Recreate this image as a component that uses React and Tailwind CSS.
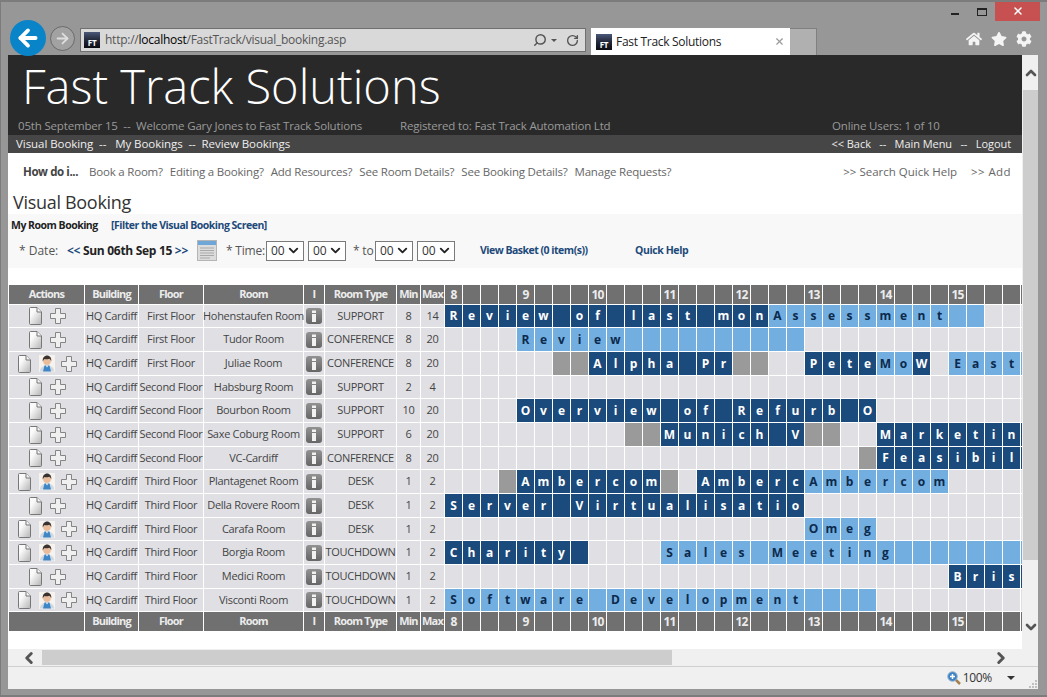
import { ChevronUp, ChevronDown, ChevronLeft, ChevronRight, ArrowLeft, ArrowRight, Search, RotateCw, X } from 'lucide-react'
import { FaHome, FaStar, FaCog } from 'react-icons/fa'

// booking kinds: d = dark blue, l = light blue, g = grey (unavailable)
const ROWS = [
  { h: 'h-[22px]', mgr: false, floor: 'First Floor', room: 'Hohenstaufen Room', type: 'SUPPORT', min: 8, max: 14,
    bookings: [['d', 0, 'Review of last mon', 18], ['l', 18, 'Assessment', 12]] },
  { h: 'h-[23px]', mgr: false, floor: 'First Floor', room: 'Tudor Room', type: 'CONFERENCE', min: 8, max: 20,
    bookings: [['l', 4, 'Review', 16]] },
  { h: 'h-[23px]', mgr: true, floor: 'First Floor', room: 'Juliae Room', type: 'CONFERENCE', min: 8, max: 20,
    bookings: [['g', 6, '', 2], ['d', 8, 'Alpha Pr', 8], ['g', 16, '', 2], ['d', 20, 'Pete', 4], ['l', 24, 'Mo', 2], ['d', 26, 'W', 1], ['l', 28, 'East', 5]] },
  { h: 'h-[22px]', mgr: false, floor: 'Second Floor', room: 'Habsburg Room', type: 'SUPPORT', min: 2, max: 4, bookings: [] },
  { h: 'h-[23px]', mgr: false, floor: 'Second Floor', room: 'Bourbon Room', type: 'SUPPORT', min: 10, max: 20,
    bookings: [['d', 4, 'Overview of Refurb O', 20]] },
  { h: 'h-[23px]', mgr: false, floor: 'Second Floor', room: 'Saxe Coburg Room', type: 'SUPPORT', min: 6, max: 20,
    bookings: [['g', 10, '', 2], ['d', 12, 'Munich V', 8], ['g', 20, '', 2], ['d', 24, 'Marketin', 9]] },
  { h: 'h-[22px]', mgr: false, floor: 'Second Floor', room: 'VC-Cardiff', type: 'CONFERENCE', min: 8, max: 20,
    bookings: [['g', 23, '', 1], ['d', 24, 'Feasibil', 9]] },
  { h: 'h-[23px]', mgr: true, floor: 'Third Floor', room: 'Plantagenet Room', type: 'DESK', min: 1, max: 2,
    bookings: [['g', 3, '', 1], ['d', 4, 'Ambercom', 8], ['g', 12, '', 1], ['d', 14, 'Amberc', 6], ['l', 20, 'Ambercom', 8]] },
  { h: 'h-[23px]', mgr: false, floor: 'Third Floor', room: 'Della Rovere Room', type: 'DESK', min: 1, max: 2,
    bookings: [['d', 0, 'Server Virtualisatio', 20]] },
  { h: 'h-[22px]', mgr: true, floor: 'Third Floor', room: 'Carafa Room', type: 'DESK', min: 1, max: 2,
    bookings: [['l', 20, 'Omeg', 4]] },
  { h: 'h-[23px]', mgr: true, floor: 'Third Floor', room: 'Borgia Room', type: 'TOUCHDOWN', min: 1, max: 2,
    bookings: [['d', 0, 'Charity', 8], ['l', 12, 'Sales Meeting', 21]] },
  { h: 'h-[23px]', mgr: false, floor: 'Third Floor', room: 'Medici Room', type: 'TOUCHDOWN', min: 1, max: 2,
    bookings: [['d', 28, 'Bris', 5]] },
  { h: 'h-[22px]', mgr: true, floor: 'Third Floor', room: 'Visconti Room', type: 'TOUCHDOWN', min: 1, max: 2,
    bookings: [['l', 0, 'Software Development', 24]] },
]

const SLOTS = 33
const CELL = {
  e: 'bg-[#e0e0e4]',
  d: 'bg-[#1b4a7c] text-white',
  l: 'bg-[#73aee0] text-[#0c2a4c]',
  g: 'bg-[#9a9a9a]',
}

function slotsFor(bookings) {
  const slots = Array.from({ length: SLOTS }, () => ({ kind: 'e', ch: '' }))
  bookings.forEach(([kind, start, text, len]) => {
    for (let i = 0; i < len; i++) slots[start + i] = { kind, ch: text[i] || '' }
  })
  return slots
}

function DocIcon() {
  return (
    <svg width="13" height="18" viewBox="0 0 13 18" className="shrink-0">
      <defs>
        <linearGradient id="docfill" x1="0" y1="0" x2="1" y2="1">
          <stop offset="0.3" stopColor="#fafafa" />
          <stop offset="1" stopColor="#b4b4b4" />
        </linearGradient>
      </defs>
      <path d="M1.5.5h6.5l4.500 4.500v11.500a1 1 0 0 1-1 1h-10a1 1 0 0 1-1-1v-15a1 1 0 0 1 1-1z" fill="url(#docfill)" stroke="#777" />
      <path d="M8 .5v4.500h4.500" fill="#f4f4f4" stroke="#777" />
    </svg>
  )
}

function PlusIcon() {
  return (
    <svg width="16" height="16" viewBox="0 0 16 16" className="shrink-0">
      <path d="M5.500.5h5v5h5v5h-5v5h-5v-5h-5v-5h5z" fill="#f0f0f0" stroke="#858585" />
    </svg>
  )
}

function PersonIcon() {
  return (
    <svg width="16" height="17" viewBox="0 0 16 17" className="shrink-0">
      <rect width="16" height="17" fill="#f6f3ef" />
      <path d="M1 16.500c0-3.500 2.500-6 7-6s7 2.500 7 6z" fill="#cfd8e0" />
      <path d="M5.500 10.500h5l1.500 6h-8z" fill="#3f86c6" />
      <path d="M6.800 10.500h2.400l-1.200 2z" fill="#ffffff" />
      <circle cx="8" cy="6.300" r="3.800" fill="#e9bd9c" />
      <path d="M3.800 6.500c-.6-3.800 1.800-6 4.300-6s4.800 2.200 4.100 6c-.4-1.500-1-2.300-1.900-2.700-1.800.7-3.800.7-4.800.3-.7.500-1.300 1.200-1.700 2.400z" fill="#3a3230" />
    </svg>
  )
}

function InfoIcon() {
  return (
    <svg width="16" height="16" viewBox="0 0 16 16">
      <defs>
        <linearGradient id="infofill" x1="0" y1="0" x2="0" y2="1">
          <stop offset="0" stopColor="#929292" />
          <stop offset="1" stopColor="#666666" />
        </linearGradient>
      </defs>
      <rect width="16" height="16" rx="3" fill="url(#infofill)" />
      <rect x="6" y="2.500" width="4" height="2.500" fill="#f2f2f2" />
      <rect x="6" y="6" width="4" height="8" fill="#f2f2f2" />
    </svg>
  )
}

function CalendarIcon() {
  return (
    <svg width="20" height="21" viewBox="0 0 20 21" className="shrink-0">
      <rect x=".5" y=".5" width="19" height="20" fill="#dcdcdc" stroke="#b5b5b5" />
      <rect x="1" y="1" width="18" height="4" fill="#6ea6d8" />
      <path d="M3 8h14M3 10.500h14M3 13h14M3 15.500h14M3 18h10" stroke="#a8a8a8" strokeWidth="1" />
    </svg>
  )
}

function ZoomIcon() {
  return (
    <svg width="14" height="14" viewBox="0 0 14 14" className="shrink-0">
      <path d="M8.500 8.500l4.500 4.500" stroke="#a5814f" strokeWidth="2.500" />
      <circle cx="5.500" cy="5.500" r="4.800" fill="#3c82c4" stroke="#9cb6cf" />
      <path d="M5.500 3v5M3 5.500h5" stroke="#ffffff" strokeWidth="1.500" />
    </svg>
  )
}

function GripIcon() {
  return (
    <svg width="8" height="8" viewBox="0 0 8 8" className="shrink-0 self-end mb-px">
      <path d="M6 0h2v2h-2zM3 3h2v2h-2zM6 3h2v2h-2zM0 6h2v2h-2zM3 6h2v2h-2zM6 6h2v2h-2z" fill="#c0c0c0" />
    </svg>
  )
}

function Favicon() {
  return (
    <div className="w-4 h-4 shrink-0 bg-gradient-to-b from-[#4b5878] via-[#23283a] to-[#0c0d12] flex items-end justify-center">
      <span className="text-[8px] leading-[10px] font-bold text-white">FT</span>
    </div>
  )
}

function TimeSelect() {
  return (
    <div className="w-[38px] h-[20px] border border-[#7a7a7a] bg-white flex items-center justify-between pl-[4px] pr-[2px] text-[12px] text-[#333]">
      00
      <ChevronDown size={15} strokeWidth={3} className="text-[#222]" />
    </div>
  )
}

function HeadCell({ children, className = '' }) {
  return (
    <div className={`h-[19px] bg-[#707070] text-[#ececec] font-bold text-[11px] tracking-[-0.8px] flex items-center justify-center ${className}`}>
      {children}
    </div>
  )
}

function HeadRow({ actions }) {
  const labels = { 0: 8, 4: 9, 8: 10, 12: 11, 16: 12, 20: 13, 24: 14, 28: 15 }
  return (
    <>
      <HeadCell>{actions}</HeadCell>
      <HeadCell>Building</HeadCell>
      <HeadCell>Floor</HeadCell>
      <HeadCell>Room</HeadCell>
      <HeadCell>I</HeadCell>
      <HeadCell>Room Type</HeadCell>
      <HeadCell>Min</HeadCell>
      <HeadCell>Max</HeadCell>
      {Array.from({ length: SLOTS }, (_, i) => (
        <HeadCell key={i} className="text-[12px]">{labels[i]}</HeadCell>
      ))}
    </>
  )
}

function TextCell({ children }) {
  return (
    <div className="bg-[#e0e0e4] text-[#444] text-[11px] tracking-[-0.3px] whitespace-nowrap flex items-center justify-center">
      {children}
    </div>
  )
}

function BookingTable() {
  return (
    <div className="grid grid-cols-[75px_53px_64px_99px_20px_71px_23px_23px_repeat(33,17px)] gap-px ml-px">
      <HeadRow actions="Actions" />
      {ROWS.map((row) => (
        <div key={row.room} className="contents">
          <div className={`${row.h} bg-[#e0e0e4] flex items-center justify-center pl-[2px]`}>
            <DocIcon />
            {row.mgr ? <div className="ml-[8px] mr-[6px]"><PersonIcon /></div> : <div className="w-[8px]" />}
            <PlusIcon />
          </div>
          <TextCell>HQ Cardiff</TextCell>
          <TextCell>{row.floor}</TextCell>
          <TextCell>{row.room}</TextCell>
          <div className="bg-[#e0e0e4] flex items-center justify-center"><InfoIcon /></div>
          <TextCell>{row.type}</TextCell>
          <TextCell>{row.min}</TextCell>
          <TextCell>{row.max}</TextCell>
          {slotsFor(row.bookings).map((s, i) => (
            <div key={i} className={`${CELL[s.kind]} text-[12px] font-bold flex items-center justify-center`}>{s.ch}</div>
          ))}
        </div>
      ))}
      <HeadRow actions="" />
    </div>
  )
}

function Chrome() {
  return (
    <div className="h-[55px] shrink-0 flex flex-col">
      <div className="h-[28px] flex justify-end items-start pt-px pr-[7px] text-[#1a1a1a]">
        <div className="w-[8px] h-[2px] bg-[#222] mt-[12px] mr-[18px]" />
        <div className="w-[10px] h-[8px] border border-[#222] border-t-2 mt-[7px] mr-[8px]" />
        <div className="w-[45px] h-[20px] bg-[#c75050] flex items-center justify-center text-white">
          <X size={12} strokeWidth={3} />
        </div>
      </div>
      <div className="h-[27px] flex items-start pl-[9px]">
        <div className="w-[36px] h-[36px] -mt-[8px] rounded-full bg-[#0a84c8] flex items-center justify-center text-white shrink-0 z-10">
          <ArrowLeft size={26} strokeWidth={3.500} />
        </div>
        <div className="w-[25px] h-[25px] -mt-[2px] ml-[4px] rounded-full border border-[#6a6a6a] bg-[#a2a2a2] flex items-center justify-center text-[#dddddd] shrink-0">
          <ArrowRight size={17} strokeWidth={2.500} />
        </div>
        <div className="w-[506px] h-[24px] ml-[5px] bg-[#d9d9d9] border border-[#707070] flex items-center pl-[3px] pr-[3px] text-[12px] tracking-[-0.25px] text-[#555]">
          <Favicon />
          <span className="ml-[5px]">http://<span className="text-black">localhost</span>/FastTrack/visual_booking.asp</span>
          <Search size={14} strokeWidth={2.500} className="ml-auto -scale-x-100 text-[#555]" />
          <span className="ml-[4px] mr-[9px] w-0 h-0 border-x-[3px] border-x-transparent border-t-[3px] border-t-[#555]" />
          <RotateCw size={13} strokeWidth={2.500} className="mr-[3px] text-[#555]" />
        </div>
        <div className="w-[199px] h-[27px] ml-[5px] bg-white flex items-center pl-[5px] pr-[5px] text-[12px] text-[#222] tracking-[-0.3px]">
          <Favicon />
          <span className="ml-[4px]">Fast Track Solutions</span>
          <X size={11} strokeWidth={2.500} className="ml-auto text-[#999]" />
        </div>
        <div className="w-[27px] h-[27px] bg-[#b0b0b0] border-r border-t border-[#808080]" />
        <div className="flex-1 flex items-center justify-end gap-[9px] pr-[15px] h-[21px] text-[#f4f4f4]">
          <FaHome size={16} />
          <FaStar size={16} />
          <FaCog size={16} />
        </div>
      </div>
    </div>
  )
}

function PageHeader() {
  return (
    <>
      <div className="h-[80px] shrink-0 bg-[#292929] flex flex-col overflow-hidden">
        <div className="h-[62px] pl-[14px] text-[47px] leading-[62px] font-light text-white whitespace-nowrap">Fast Track Solutions</div>
        <div className="flex pl-[10px] text-[11.5px] tracking-[-0.17px] text-[#9a9a9a] whitespace-nowrap">
          <span className="w-[382px]">05th September 15&nbsp; --&nbsp; Welcome Gary Jones to Fast Track Solutions</span>
          <span className="w-[432px]">Registered to: Fast Track Automation Ltd</span>
          <span>Online Users: 1 of 10</span>
        </div>
      </div>
      <div className="h-[18px] shrink-0 bg-[#464646] flex items-center justify-between pl-[8px] pr-[11px] text-[11.5px] tracking-[-0.06px] text-[#eeeeee] whitespace-nowrap">
        <span>Visual Booking&nbsp; --&nbsp;&nbsp; My Bookings&nbsp; --&nbsp; Review Bookings</span>
        <span className="text-[11px]">&lt;&lt; Back&nbsp;&nbsp; --&nbsp;&nbsp; Main Menu&nbsp;&nbsp; --&nbsp;&nbsp; Logout</span>
      </div>
      <div className="h-[38px] shrink-0 flex items-center pl-[15px] pr-[11px] text-[11.5px] text-[#666] whitespace-nowrap">
        <b className="text-[#444] w-[66px] tracking-[-0.4px]">How do i...</b>
        <div className="flex gap-[7px] tracking-[-0.2px]">
          <span>Book a Room?</span>
          <span>Editing a Booking?</span>
          <span>Add Resources?</span>
          <span>See Room Details?</span>
          <span>See Booking Details?</span>
          <span>Manage Requests?</span>
        </div>
        <span className="ml-auto">&gt;&gt; Search Quick Help</span>
        <span className="ml-[14px] tracking-[0.4px]">&gt;&gt; Add</span>
      </div>
      <div className="h-[23px] shrink-0 pl-[5px] text-[18px] leading-[23px] tracking-[-0.3px] text-[#333]">Visual Booking</div>
    </>
  )
}

function FilterBand() {
  return (
    <div className="h-[54px] shrink-0 bg-[#f8f8f8] text-[10.5px] whitespace-nowrap">
      <div className="h-[23px] flex items-center pl-[3px] font-bold tracking-[-0.5px]">
        <span className="w-[100px] text-[#222]">My Room Booking</span>
        <span className="text-[#1d4a7a]">[Filter the Visual Booking Screen]</span>
      </div>
      <div className="h-[27px] flex items-center pl-[11px] text-[12px] text-[#555]">
        <span className="w-[48px]">* Date:</span>
        <span className="w-[130px] font-bold text-[#1d4a7a] tracking-[-0.3px]">
          &lt;&lt; <span className="text-[#222]">Sun 06th Sep 15</span> &gt;&gt;
        </span>
        <CalendarIcon />
        <span className="ml-[9px] w-[40px] tracking-[-0.2px]">* Time:</span>
        <TimeSelect />
        <span className="w-[4px]" />
        <TimeSelect />
        <span className="ml-[7px] w-[22px] tracking-[-0.2px]">* to</span>
        <TimeSelect />
        <span className="w-[4px]" />
        <TimeSelect />
        <span className="ml-[25px] w-[155px] text-[10.5px] font-bold text-[#1d4a7a] tracking-[-0.5px]">View Basket (0 item(s))</span>
        <span className="text-[10.5px] font-bold text-[#1d4a7a] tracking-[-0.4px]">Quick Help</span>
      </div>
    </div>
  )
}

export default function App() {
  return (
    <div className="w-[1047px] h-[697px] bg-[#979797] border-t-2 border-l border-b-2 border-[#7c7c7c] flex flex-col overflow-hidden font-['Open_Sans',sans-serif] box-border">
      <div className="-mt-[2px]">
        <Chrome />
      </div>
      <div className="ml-[7px] mr-[9px] flex flex-col">
        <div className="flex h-[594px]">
          <div className="w-[1014px] shrink-0 bg-white overflow-hidden flex flex-col">
            <PageHeader />
            <FilterBand />
            <div className="h-[17px] shrink-0" />
            <BookingTable />
          </div>
          <div className="w-[16px] shrink-0 bg-[#f0f0f0] flex flex-col items-center text-[#555] pl-px">
            <ChevronUp size={16} strokeWidth={4} className="mt-[10px] mb-[9px] shrink-0" />
            <div className="w-full h-[470px] bg-[#cdcdcd]" />
            <ChevronDown size={16} strokeWidth={4} className="mt-[59px] shrink-0" />
          </div>
        </div>
        <div className="h-[17px] bg-[#f0f0f0] flex items-center text-[#555]">
          <div className="w-[34px] flex justify-end pr-[4px]"><ChevronLeft size={18} strokeWidth={4} /></div>
          <div className="w-[630px] h-[15px] bg-[#cdcdcd]" />
          <div className="ml-auto mr-[28px]"><ChevronRight size={18} strokeWidth={4} /></div>
        </div>
        <div className="h-[23px] bg-[#f0f0f0] border-t border-[#d0d0d0] flex items-center justify-end pr-px text-[12px] tracking-[-0.3px] text-[#333]">
          <ZoomIcon />
          <span className="ml-[2px]">100%</span>
          <span className="ml-[15px] w-0 h-0 border-x-[4px] border-x-transparent border-t-[4px] border-t-[#333]" />
          <span className="w-[14px]" />
          <GripIcon />
        </div>
      </div>
    </div>
  )
}
